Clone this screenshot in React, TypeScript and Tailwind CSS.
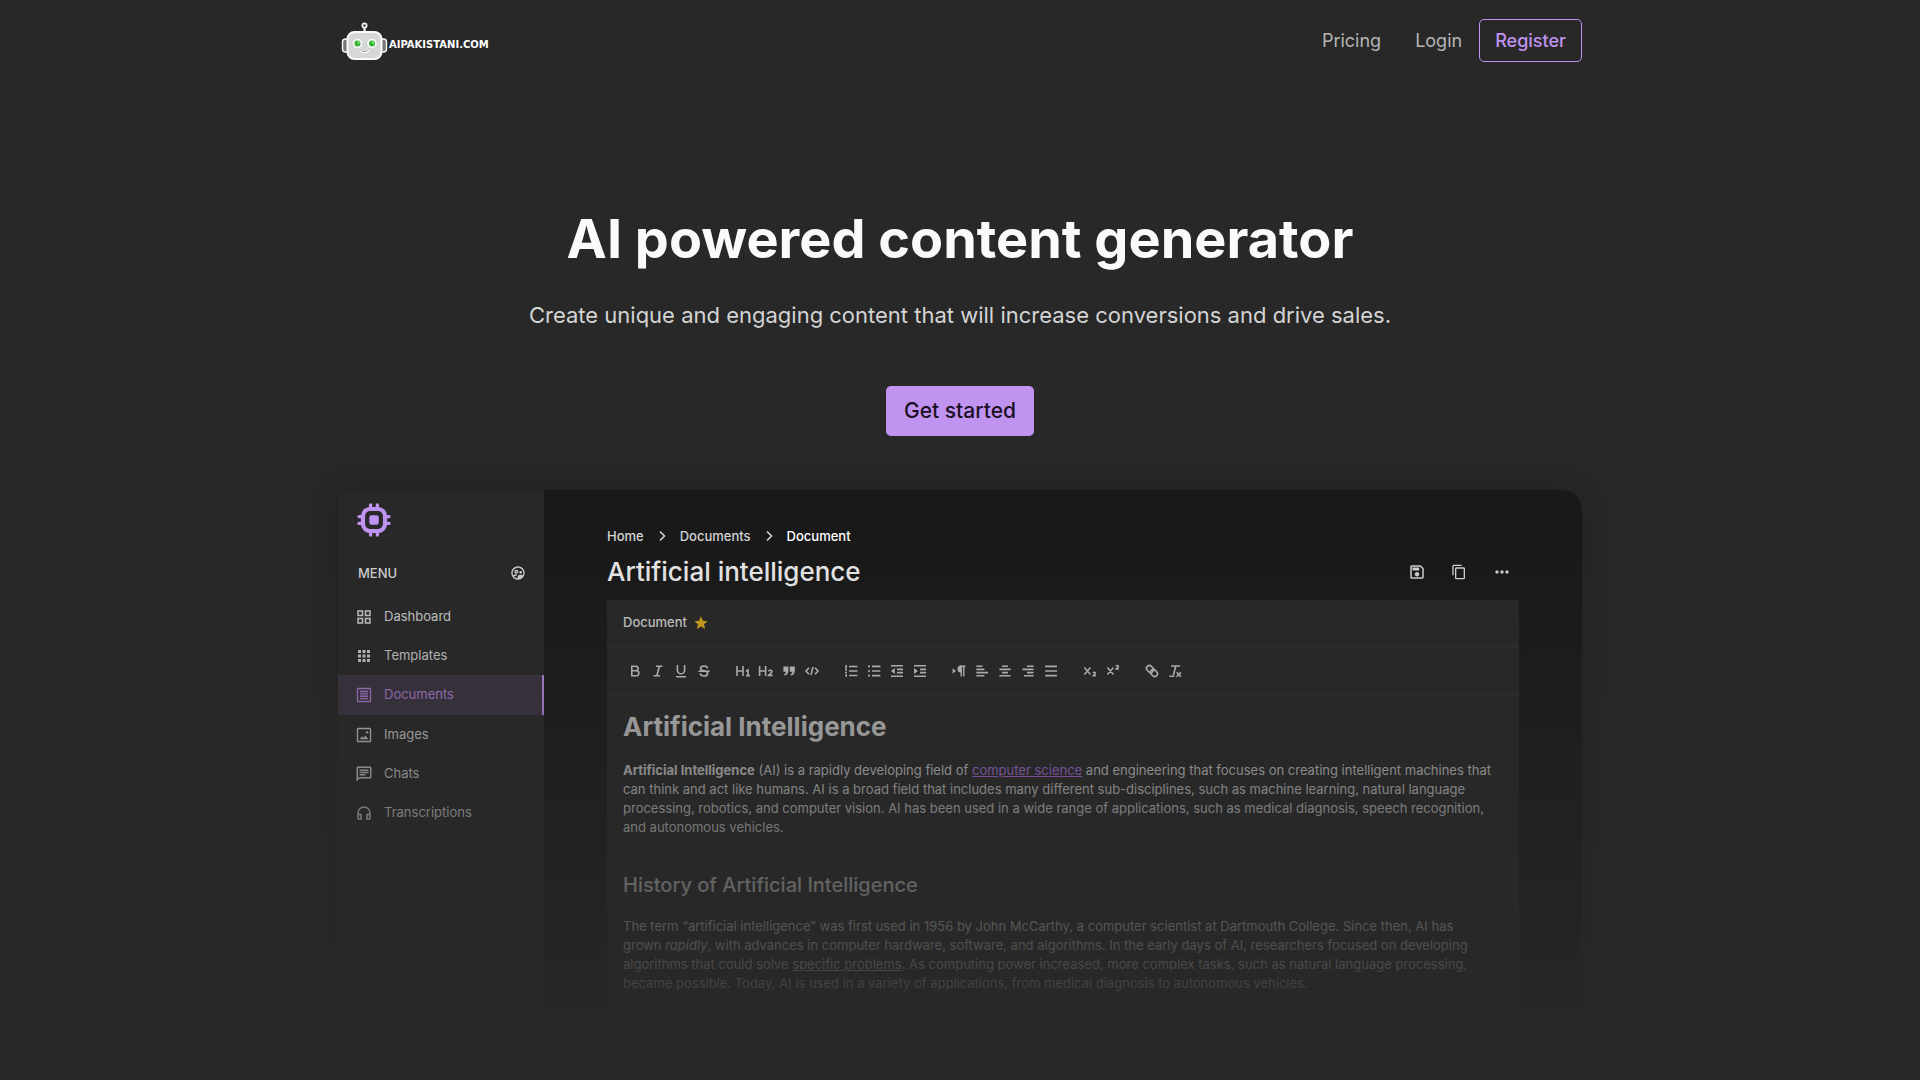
import type { ReactNode } from "react";
import {
  MdApps,
  MdContentCopy,
  MdMoreHoriz,
  MdOutlineChat,
  MdOutlineGridView,
  MdOutlineHeadphones,
  MdOutlineSave,
  MdOutlineSupervisedUserCircle,
  MdStar,
} from "react-icons/md";

function Glyph({ children }: { children: ReactNode }) {
  return (
    <svg viewBox="0 0 16 16" className="h-4 w-4" fill="none" stroke="currentColor" strokeWidth="1.6">
      {children}
    </svg>
  );
}

function DocumentIcon() {
  return (
    <svg viewBox="0 0 16 16" className="h-[18px] w-[18px]" fill="none" stroke="currentColor" strokeWidth="1.2">
      <rect x="2.2" y="2.2" width="11.6" height="11.6" rx="0.6" />
      <path d="M4.4 4.9h7.2M4.4 7h7.2M4.4 9.1h7.2M4.4 11.2h7.2" />
    </svg>
  );
}

function ImageIcon() {
  return (
    <svg viewBox="0 0 16 16" className="h-[18px] w-[18px]" fill="none" stroke="currentColor" strokeWidth="1.2">
      <rect x="2.2" y="2.2" width="11.6" height="11.6" rx="0.8" />
      <path d="M4.2 11.8l2-2.8 1.4 1.6L9.2 8.4l2.6 3.4z" fill="currentColor" stroke="none" />
      <path d="M10.8 4l.5 1.2 1.2.5-1.2.5-.5 1.2-.5-1.2-1.2-.5 1.2-.5z" fill="currentColor" stroke="none" />
    </svg>
  );
}

const menu = [
  { label: "Dashboard", icon: <MdOutlineGridView className="h-[18px] w-[18px]" /> },
  { label: "Templates", icon: <MdApps className="h-5 w-[18px]" /> },
  { label: "Documents", icon: <DocumentIcon />, active: true },
  { label: "Images", icon: <ImageIcon /> },
  { label: "Chats", icon: <MdOutlineChat className="h-[18px] w-[18px]" /> },
  { label: "Transcriptions", icon: <MdOutlineHeadphones className="h-[18px] w-[18px]" /> },
];

const toolbar: { label: string; icon: ReactNode }[][] = [
  [
    { label: "Bold", icon: <path d="M4.8 3.2h4a2.2 2.2 0 0 1 0 4.6h-4zM4.8 7.8h4.6a2.4 2.4 0 0 1 0 5H4.8z" /> },
    { label: "Italic", icon: <path d="M6 3.2h6.4M3.6 12.8H10M9.4 3.2L6.8 12.8" /> },
    { label: "Underline", icon: <path d="M4.4 2v5.2a3.6 3.6 0 0 0 7.2 0V2M3 13.8h10" /> },
    {
      label: "Strike",
      icon: <path d="M11.6 5.4C11.4 3.8 10 3 8 3 5.8 3 4.6 4 4.6 5.4c0 3.2 7 1.6 7 5 0 1.6-1.4 2.6-3.6 2.6s-3.6-1-3.8-2.6M2.4 8.2h11.2" />,
    },
  ],
  [
    { label: "Heading 1", icon: <path d="M2 3v10M8 3v10M2 8h6M11 8.2l2-1.2v6M11 12.6h4" /> },
    { label: "Heading 2", icon: <path d="M1.6 3v10M7.6 3v10M1.6 8h6M10.4 8.4c.4-1.6 3.6-1.6 3.6.2 0 1.4-2.2 2-3.4 3.8h4" /> },
    {
      label: "Quote",
      icon: (
        <path
          d="M2.4 3.4h5v4.4c0 2.6-1.4 4.2-3.8 4.8l-.6-1.4c1.2-.4 1.9-1.2 2-2.4H2.4zM8.8 3.4h5v4.4c0 2.6-1.4 4.2-3.8 4.8l-.6-1.4c1.2-.4 1.9-1.2 2-2.4H8.8z"
          fill="currentColor"
          stroke="none"
        />
      ),
    },
    { label: "Code", icon: <path d="M5 4.8L2 8l3 3.2M11 4.8L14 8l-3 3.2M9 4l-2 8" /> },
  ],
  [
    { label: "Numbered list", icon: <path d="M6 3.4h8.4M6 8h8.4M6 12.6h8.4M3.2 2v3M2 7h2M2 9.4h2M3.2 11v3M2 4.8h2" strokeWidth="1.5" /> },
    { label: "Bulleted list", icon: <path d="M6 3.4h8.4M6 8h8.4M6 12.6h8.4M2 3.4h2M2 8h2M2 12.6h2" /> },
    {
      label: "Outdent",
      icon: (
        <>
          <path d="M2 2.8h12M8 6.4h6M8 9.6h6M2 13.2h12" />
          <path d="M5.8 5v6L2 8z" fill="currentColor" stroke="none" />
        </>
      ),
    },
    {
      label: "Indent",
      icon: (
        <>
          <path d="M2 2.8h12M8 6.4h6M8 9.6h6M2 13.2h12" />
          <path d="M2 5v6l3.8-3z" fill="currentColor" stroke="none" />
        </>
      ),
    },
  ],
  [
    {
      label: "Text direction",
      icon: (
        <>
          <path d="M1.6 5.2v5.6L5 8z" fill="currentColor" stroke="none" />
          <path d="M10 3.2A2.6 2.6 0 0 0 10 8.6z" fill="currentColor" />
          <path d="M9 3.2h5.4M10.2 3v10.4M12.8 3v10.4" strokeWidth="1.4" />
        </>
      ),
    },
    { label: "Align left", icon: <path d="M2.4 3.2h6M2.4 6.4h8M2.4 9.6h11.6M2.4 12.8h8" /> },
    { label: "Align center", icon: <path d="M5 3.2h6M2.4 6.4h11.2M5 9.6h6M2.4 12.8h11.2" /> },
    { label: "Align right", icon: <path d="M7 3.2h6.6M2.4 6.4h11.2M7 9.6h6.6M4 12.8h9.6" /> },
    { label: "Justify", icon: <path d="M2.2 3.4H14M2.2 8H14M2.2 12.6H14" /> },
  ],
  [
    { label: "Subscript", icon: <path d="M2.4 4.6l6 7M8.4 4.6l-6 7M11 10c.4-1 2.4-1 2.4.2 0 1-1.4 1.4-2.2 2.6h2.6" strokeWidth="1.5" /> },
    { label: "Superscript", icon: <path d="M2.4 4.6l6 7M8.4 4.6l-6 7M11 3.2c.4-1 2.4-1 2.4.2 0 1-1.4 1.4-2.2 2.6h2.6" strokeWidth="1.5" /> },
  ],
  [
    {
      label: "Link",
      icon: (
        <g transform="rotate(45 8 8)">
          <rect x="1.4" y="5.2" width="7.6" height="5.6" rx="2.8" />
          <rect x="7" y="5.2" width="7.6" height="5.6" rx="2.8" />
        </g>
      ),
    },
    { label: "Clear formatting", icon: <path d="M4 3h9M8.8 3L6.4 12M2.4 13.2h5M9.6 9.4l4.4 4.4M14 9.4l-4.4 4.4" /> },
  ],
];

function Logo() {
  return (
    <a href="#" className="flex items-center" aria-label="aipakistani.com">
      <svg viewBox="0 0 48 40" className="h-10 w-12 shrink-0">
        <path d="M23.5 4v8" stroke="#f4f4f4" strokeWidth="2.2" />
        <circle cx="23.5" cy="4.6" r="2.2" fill="#4b5a4b" stroke="#f4f4f4" strokeWidth="1.6" />
        <rect x="1.5" y="18" width="8" height="13" rx="3" fill="#777" stroke="#f8f8f8" strokeWidth="1.4" />
        <rect x="37.5" y="18" width="8" height="13" rx="3" fill="#777" stroke="#f8f8f8" strokeWidth="1.4" />
        <rect x="6.5" y="11" width="34" height="27" rx="7" fill="#d6d8d8" stroke="#fafafa" strokeWidth="2" />
        <circle cx="16.5" cy="22.5" r="4.8" fill="#f6f6f6" />
        <circle cx="31" cy="22.5" r="4.8" fill="#f6f6f6" />
        <circle cx="16.5" cy="22.5" r="3" fill="#35b52f" />
        <circle cx="31" cy="22.5" r="3" fill="#35b52f" />
        <circle cx="17.5" cy="21.5" r="1" fill="#b8f5a8" />
        <circle cx="32" cy="21.5" r="1" fill="#b8f5a8" />
        <path d="M19.5 29.5c2 2.4 6.5 2.4 8-.6" fill="none" stroke="#fff" strokeWidth="2.4" />
        <path d="M20 29.3c2 1.8 5.6 1.8 7.2-.6" fill="none" stroke="#777" strokeWidth="0.8" />
      </svg>
      <span className="pt-2 font-['DejaVu_Sans',sans-serif] text-[10px] leading-4 font-bold text-white">
        AIPAKISTANI.COM
      </span>
    </a>
  );
}

function ChipIcon() {
  return (
    <svg viewBox="0 0 34 34" className="h-[34px] w-[34px] text-[#c193f0]" fill="none" stroke="currentColor">
      <rect x="6" y="6" width="22" height="22" rx="7" strokeWidth="4.2" />
      <rect x="12.3" y="12.3" width="9.4" height="9.4" rx="2" fill="currentColor" stroke="none" />
      <path
        d="M13.6 2v3M20.4 2v3M13.6 29v3M20.4 29v3M2 13.6h3M2 20.4h3M29 13.6h3M29 20.4h3"
        strokeWidth="3.4"
        strokeLinecap="round"
      />
    </svg>
  );
}

function Header() {
  return (
    <header className="border-b border-[#242424]">
      <div className="mx-auto flex h-[86px] max-w-[1244px] items-center justify-between pb-[5px]">
        <div className="pl-[3px]">
          <Logo />
        </div>
        <nav className="flex items-center text-lg text-[#b5b5b5]">
          <a href="#" className="px-[17px]">Pricing</a>
          <a href="#" className="px-[17px]">Login</a>
          <a
            href="#"
            className="flex h-[43px] items-center rounded-[5px] border border-[#c193f0] px-[15px] font-medium text-[#c193f0]"
          >
            Register
          </a>
        </nav>
      </div>
    </header>
  );
}

function Sidebar() {
  return (
    <aside className="w-[206px] shrink-0 bg-[#282828] pt-[13px]">
      <div className="pl-[19px]">
        <ChipIcon />
      </div>
      <div className="mt-[26px] mb-[14px] flex items-center justify-between pr-[18px] pl-5 text-[13px] leading-5 font-medium">
        MENU
        <MdOutlineSupervisedUserCircle className="h-4 w-4" />
      </div>
      <ul className="text-[13px]">
        {menu.map((item) => (
          <li key={item.label}>
            <a
              href="#"
              className={
                item.active
                  ? "flex h-10 items-center gap-[11px] border-r-2 border-[#c193f0] bg-[#3c3442] pl-[17px] text-[#b283de]"
                  : "flex h-[39px] items-center gap-[11px] pl-[17px]"
              }
            >
              {item.icon}
              {item.label}
            </a>
          </li>
        ))}
      </ul>
    </aside>
  );
}

function Chevron() {
  return (
    <svg viewBox="0 0 12 12" className="h-3 w-3" fill="none" stroke="currentColor" strokeWidth="1.6">
      <path d="M4 1.5L8.5 6 4 10.5" />
    </svg>
  );
}

function Editor() {
  return (
    <div className="grow bg-[#191919] px-[63px] pt-9">
      <nav className="flex items-center gap-3 text-[13px] leading-5 font-medium">
        <a href="#">Home</a>
        <Chevron />
        <a href="#">Documents</a>
        <Chevron />
        <span className="text-white">Document</span>
      </nav>
      <div className="mt-2 flex items-center justify-between pr-[7px]">
        <h2 className="text-[26px] leading-9 font-medium text-[#ececec]">Artificial intelligence</h2>
        <div className="flex items-center gap-[25px]">
          <button aria-label="Save"><MdOutlineSave className="h-[18px] w-[18px]" /></button>
          <button aria-label="Copy"><MdContentCopy className="h-4 w-4" /></button>
          <button aria-label="More"><MdMoreHoriz className="h-5 w-5" /></button>
        </div>
      </div>
      <div className="mt-[10px] bg-[#282828]">
        <div className="flex h-[47px] items-center gap-[6px] border-b border-[#343434] px-4 text-[13px] font-medium">
          Document
          <MdStar className="h-4 w-4 text-[#dba91c]" />
        </div>
        <div className="flex h-12 items-center gap-4 border-b border-[#343434] px-4">
          {toolbar.map((group, i) => (
            <div key={i} className="flex">
              {group.map((tool) => (
                <button key={tool.label} aria-label={tool.label} className="flex w-[23px] justify-center">
                  <Glyph>{tool.icon}</Glyph>
                </button>
              ))}
            </div>
          ))}
        </div>
        <div className="px-4 pt-[14px] pb-4">
          <h3 className="text-[26px] leading-9 font-bold">Artificial Intelligence</h3>
          <p className="mt-4 text-[13px] leading-[19px]">
            <strong>Artificial Intelligence</strong> (AI) is a rapidly developing field of{" "}
            <a href="#" className="text-[#b070e8] underline">computer science</a> and engineering that focuses on
            creating intelligent machines that can think and act like humans. AI is a broad field that includes many
            different sub-disciplines, such as machine learning, natural language processing, robotics, and computer
            vision. AI has been used in a wide range of applications, such as medical diagnosis, speech recognition,
            and autonomous vehicles.
          </p>
          <h4 className="mt-8 text-xl leading-8 font-medium">History of Artificial Intelligence</h4>
          <p className="mt-4 pr-4 text-[13px] leading-[19px]">
            The term “artificial intelligence” was first used in 1956 by John McCarthy, a computer scientist at
            Dartmouth College. Since then, AI has grown <em>rapidly</em>, with advances in computer hardware, software,
            and algorithms. In the early days of AI, researchers focused on developing algorithms that could solve{" "}
            <u>specific problems</u>. As computing power increased, more complex tasks, such as natural language
            processing, became possible. Today, AI is used in a variety of applications, from medical diagnosis to
            autonomous vehicles.
          </p>
        </div>
      </div>
    </div>
  );
}

export default function App() {
  return (
    <div className="min-h-screen bg-[#282828] font-[Inter,sans-serif] text-[#d4d4d4]">
      <Header />
      <main className="mx-auto max-w-[1244px] pt-28">
        <section className="flex flex-col items-center text-center">
          <h1 className="text-[54px] leading-20 font-bold text-[#fafafa]">AI powered content generator</h1>
          <p className="mt-[18px] text-[22px] leading-9">
            Create unique and engaging content that will increase conversions and drive sales.
          </p>
          <a
            href="#"
            className="mt-[53px] flex h-[50px] items-center rounded-[5px] bg-[#c193f0] px-[18px] text-[21px] font-medium text-[#1a1024]"
          >
            Get started
          </a>
        </section>
        <section className="relative mt-[54px] rounded-r-[20px] shadow-[0_0_28px_rgba(0,0,0,0.2)]">
          <div className="flex overflow-hidden rounded-tr-[20px]">
            <Sidebar />
            <Editor />
          </div>
          {/* fades the preview into the page */}
          <div className="pointer-events-none absolute -inset-x-10 top-0 -bottom-12 bg-linear-to-b from-[#282828]/0 from-10% to-[#282828]"></div>
        </section>
      </main>
    </div>
  );
}
